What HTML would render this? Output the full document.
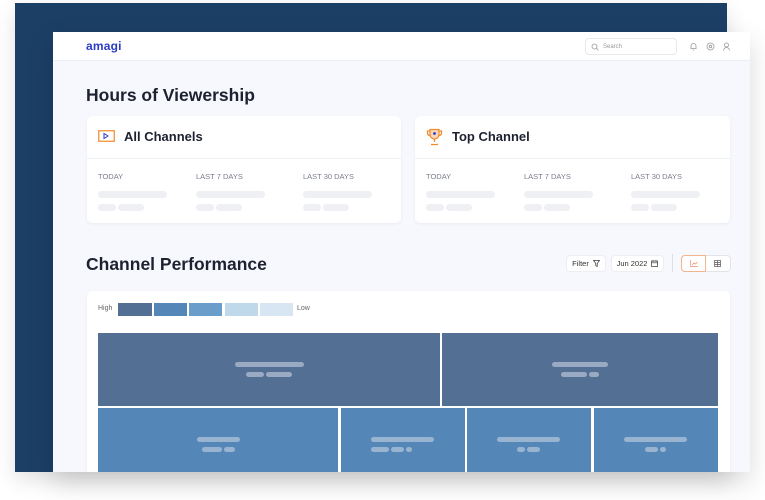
<!DOCTYPE html>
<html><head><style>
*{margin:0;padding:0;box-sizing:border-box}
body{width:765px;height:500px;background:#fff;position:relative;overflow:hidden;font-family:"Liberation Sans",sans-serif}
.a{position:absolute}
.navy{left:15px;top:3px;width:712px;height:469px;background:#1c3f66;box-shadow:0 8px 20px rgba(0,0,0,.12)}
.win{left:53px;top:32px;width:697px;height:440px;background:#f7f8fd;overflow:hidden;box-shadow:0 10px 25px rgba(0,0,0,.15)}
.hdr{left:0;top:0;width:697px;height:29px;background:#fff;border-bottom:1px solid #eceef5}
.card{background:#fff;border-radius:5px;box-shadow:0 1px 3px rgba(0,0,0,.06)}
.lbl{font-size:7.5px;color:#7a7f8e}
.sk{background:#eff0f3;border-radius:4px;height:7px}
h1{font-size:17.5px;font-weight:bold;color:#1e2230}
.ct{font-size:13px;font-weight:bold;color:#1e2230}
.btn{background:#fff;border:1px solid #eceef3;border-radius:4px;font-size:7.5px;color:#333;display:flex;align-items:center;justify-content:center;gap:4px}
.t1{background:#536f94}.t2{background:#5487b7}
.pb{background:rgba(200,210,225,.6);border-radius:3px;height:5px;position:absolute}
</style></head><body>
<div class="a navy"></div>
<div class="a win">
 <div class="a hdr">
  <div class="a" style="left:33px;top:7px;font-size:12px;font-weight:bold;color:#2a3bc7;letter-spacing:.2px">amagi</div>
  <div class="a" style="left:532px;top:6px;width:92px;height:17px;border:1px solid #e6e8ee;border-radius:4px;font-size:6px;color:#999;padding:5px 0 0 17px">Search
   <svg class="a" style="left:5px;top:4px" width="8" height="8" viewBox="0 0 8 8"><circle cx="3.5" cy="3.5" r="2.5" fill="none" stroke="#999" stroke-width=".8"/><path d="M5.4 5.4L7.3 7.3" stroke="#999" stroke-width=".8"/></svg></div>
  <svg class="a" style="left:636px;top:10px" width="9" height="9" viewBox="0 0 9 9"><path d="M2 6.5V4a2.5 2.5 0 015 0v2.5zM1.5 6.5h6M3.8 8h1.4" fill="none" stroke="#999" stroke-width=".8"/></svg>
  <svg class="a" style="left:653px;top:10px" width="9" height="9" viewBox="0 0 9 9"><circle cx="4.5" cy="4.5" r="3.5" fill="none" stroke="#999" stroke-width=".8"/><circle cx="4.5" cy="4.5" r="1.3" fill="none" stroke="#999" stroke-width=".8"/></svg>
  <svg class="a" style="left:669px;top:10px" width="9" height="9" viewBox="0 0 9 9"><circle cx="4.5" cy="3" r="2" fill="none" stroke="#999" stroke-width=".8"/><path d="M1.5 8.5a3 3 0 016 0" fill="none" stroke="#999" stroke-width=".8"/></svg>
 </div>
 <h1 class="a" style="left:33px;top:53px">Hours of Viewership</h1>
 <div class="a card" style="left:34px;top:84px;width:314px;height:107px">
  <svg class="a" style="left:11px;top:14px" width="17" height="12" viewBox="0 0 17 12"><rect x=".75" y=".75" width="15.5" height="10.5" fill="none" stroke="#f08a2c" stroke-width="1.2"/><path d="M6 3.5v5l4-2.5z" fill="none" stroke="#2a3bc7" stroke-width="1"/></svg>
  <div class="a ct" style="left:37px;top:13px">All Channels</div>
  <div class="a" style="left:0;top:42px;width:100%;height:1px;background:#eef0f4"></div>
  <div class="a lbl" style="left:11px;top:56px">TODAY</div><div class="a lbl" style="left:109px;top:56px">LAST 7 DAYS</div><div class="a lbl" style="left:216px;top:56px">LAST 30 DAYS</div>
  <div class="a sk" style="left:11px;top:107px"></div>
  <div class="a sk" style="left:11px;top:106px;width:0"></div>
  <div class="a sk" style="left:11px;top:106px;width:0"></div>
  <div class="a sk" style="left:11px;top:106px;width:0"></div>
  <div class="a sk" style="left:11px;top:75px;width:69px"></div><div class="a sk" style="left:11px;top:88px;width:18px"></div><div class="a sk" style="left:31px;top:88px;width:26px"></div>
  <div class="a sk" style="left:109px;top:75px;width:69px"></div><div class="a sk" style="left:109px;top:88px;width:18px"></div><div class="a sk" style="left:129px;top:88px;width:26px"></div>
  <div class="a sk" style="left:216px;top:75px;width:69px"></div><div class="a sk" style="left:216px;top:88px;width:18px"></div><div class="a sk" style="left:236px;top:88px;width:26px"></div>
 </div>
 <div class="a card" style="left:362px;top:84px;width:315px;height:107px">
  <svg class="a" style="left:11px;top:12px" width="17" height="18" viewBox="0 0 17 18"><path d="M4 1.5h9v5a4.5 4.5 0 01-9 0z" fill="#f6d8b8" stroke="#f08a2c" stroke-width="1.2"/><path d="M4 3H1.5v2a2.5 2.5 0 002.7 2.5M13 3h2.5v2a2.5 2.5 0 01-2.7 2.5M8.5 11v3M5 16.5h7" fill="none" stroke="#f08a2c" stroke-width="1.3"/><circle cx="8.5" cy="5.5" r="1.4" fill="#2a3bc7"/></svg>
  <div class="a ct" style="left:37px;top:13px">Top Channel</div>
  <div class="a" style="left:0;top:42px;width:100%;height:1px;background:#eef0f4"></div>
  <div class="a lbl" style="left:11px;top:56px">TODAY</div><div class="a lbl" style="left:109px;top:56px">LAST 7 DAYS</div><div class="a lbl" style="left:216px;top:56px">LAST 30 DAYS</div>
  <div class="a sk" style="left:11px;top:75px;width:69px"></div><div class="a sk" style="left:11px;top:88px;width:18px"></div><div class="a sk" style="left:31px;top:88px;width:26px"></div>
  <div class="a sk" style="left:109px;top:75px;width:69px"></div><div class="a sk" style="left:109px;top:88px;width:18px"></div><div class="a sk" style="left:129px;top:88px;width:26px"></div>
  <div class="a sk" style="left:216px;top:75px;width:69px"></div><div class="a sk" style="left:216px;top:88px;width:18px"></div><div class="a sk" style="left:236px;top:88px;width:26px"></div>
 </div>
 <h1 class="a" style="left:33px;top:222px">Channel Performance</h1>
 <div class="a btn" style="left:513px;top:223px;width:40px;height:17px">Filter <svg width="7" height="7" viewBox="0 0 7 7"><path d="M.5 .5h6L4.2 3.5v3l-1.4-.8V3.5z" fill="none" stroke="#333" stroke-width=".7"/></svg></div>
 <div class="a btn" style="left:558px;top:223px;width:53px;height:17px">Jun 2022 <svg width="7" height="7" viewBox="0 0 7 7"><rect x=".5" y="1" width="6" height="5.5" fill="none" stroke="#333" stroke-width=".7"/><path d="M.5 2.8h6M2 .2v1.5M5 .2v1.5" stroke="#333" stroke-width=".7"/></svg></div>
 <div class="a" style="left:619px;top:222px;width:1px;height:18px;background:#dcdfe6"></div>
 <div class="a" style="left:628px;top:223px;width:50px;height:17px;border:1px solid #e2e4ea;border-radius:4px;background:#fff"></div>
 <div class="a" style="left:628px;top:223px;width:25px;height:17px;border:1px solid #f4b48c;border-radius:4px 0 0 4px;background:#fff"><svg class="a" style="left:8px;top:4px" width="8" height="7" viewBox="0 0 8 7"><path d="M.5 0v6.5H8M2 5l2-2 1.5 1L7.5 2" fill="none" stroke="#f08a6c" stroke-width=".7"/></svg></div>
 <svg class="a" style="left:661px;top:228px" width="7" height="7" viewBox="0 0 7 7"><rect x=".5" y=".5" width="6" height="6" fill="none" stroke="#555" stroke-width=".7"/><path d="M.5 2.5h6M.5 4.5h6M3.5.5v6" stroke="#555" stroke-width=".7"/></svg>
 <div class="a card" style="left:34px;top:259px;width:643px;height:200px">
  <div class="a" style="left:11px;top:14px;font-size:7px;color:#666">High</div>
  <div class="a" style="left:31px;top:12px;width:34px;height:13px;background:#536f94"></div>
  <div class="a" style="left:67px;top:12px;width:33px;height:13px;background:#5487b7"></div>
  <div class="a" style="left:102px;top:12px;width:33px;height:13px;background:#6a9dc9"></div>
  <div class="a" style="left:138px;top:12px;width:33px;height:13px;background:#c0d9ea"></div>
  <div class="a" style="left:173px;top:12px;width:33px;height:13px;background:#d8e6f3"></div>
  <div class="a" style="left:210px;top:14px;font-size:7px;color:#666">Low</div>
  <div class="a t1" style="left:11px;top:42px;width:342px;height:73px"><div class="pb" style="left:137px;top:29px;width:69px"></div><div class="pb" style="left:148px;top:39px;width:18px"></div><div class="pb" style="left:168px;top:39px;width:26px"></div></div>
  <div class="a t1" style="left:355px;top:42px;width:276px;height:73px"><div class="pb" style="left:110px;top:29px;width:56px"></div><div class="pb" style="left:119px;top:39px;width:26px"></div><div class="pb" style="left:147px;top:39px;width:10px"></div></div>
  <div class="a t2" style="left:11px;top:117px;width:240px;height:70px"><div class="pb" style="left:99px;top:29px;width:43px"></div><div class="pb" style="left:104px;top:39px;width:20px"></div><div class="pb" style="left:126px;top:39px;width:11px"></div></div>
  <div class="a t2" style="left:254px;top:117px;width:124px;height:70px"><div class="pb" style="left:30px;top:29px;width:63px"></div><div class="pb" style="left:30px;top:39px;width:18px"></div><div class="pb" style="left:50px;top:39px;width:13px"></div><div class="pb" style="left:65px;top:39px;width:6px"></div></div>
  <div class="a t2" style="left:380px;top:117px;width:124px;height:70px"><div class="pb" style="left:30px;top:29px;width:63px"></div><div class="pb" style="left:50px;top:39px;width:8px"></div><div class="pb" style="left:60px;top:39px;width:13px"></div></div>
  <div class="a t2" style="left:507px;top:117px;width:124px;height:70px"><div class="pb" style="left:30px;top:29px;width:63px"></div><div class="pb" style="left:51px;top:39px;width:13px"></div><div class="pb" style="left:66px;top:39px;width:6px"></div></div>
 </div>
</div>
</body></html>
